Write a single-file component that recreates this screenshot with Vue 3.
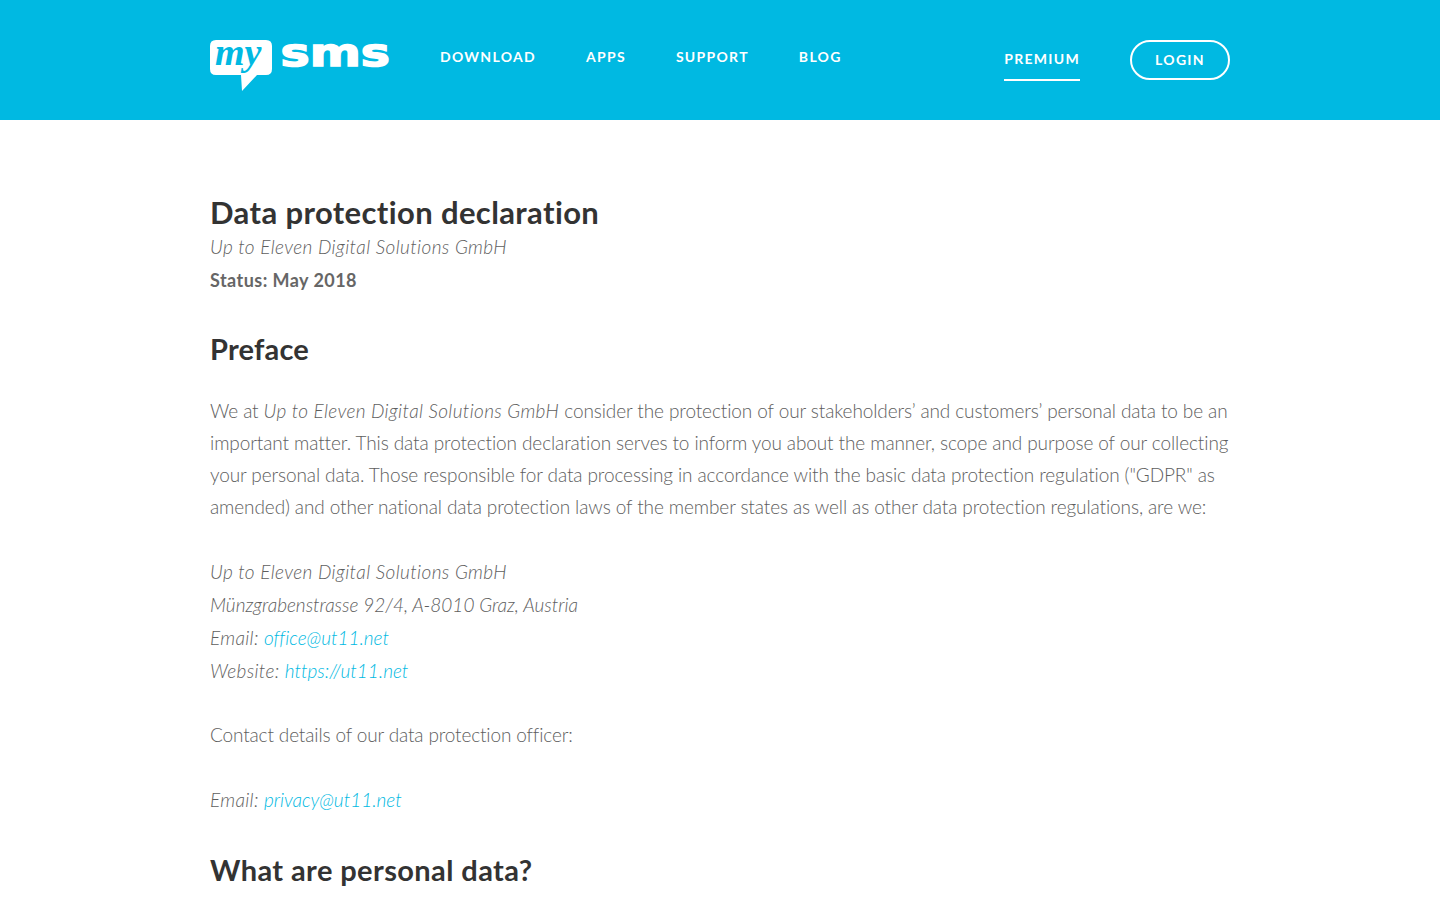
<template>
  <div class="page">
    <header class="header">
      <div class="header-inner">
        <a class="logo" href="#">
          <svg class="logo-svg" width="180" height="72" viewBox="0 -20 180 72">
            <path class="bubble" d="M6 0H56Q62 0 62 6V29Q62 35 56 35H47L32 51L31 35H6Q0 35 0 29V6Q0 0 6 0Z" />
            <text class="logo-my" x="5" y="25">my</text>
            <text class="logo-sms" transform="translate(70.5 26) scale(1.29 1)">sms</text>
          </svg>
        </a>
        <nav class="nav">
          <a v-for="item in navItems" :key="item" class="nav-link" href="#">{{ item }}</a>
        </nav>
        <div class="actions">
          <a class="premium" href="#">PREMIUM</a>
          <a class="login" href="#">LOGIN</a>
        </div>
      </div>
    </header>

    <main class="content">
      <h1>Data protection declaration</h1>
      <p class="company"><em>Up to Eleven Digital Solutions GmbH</em></p>
      <p class="status">Status: May 2018</p>

      <h2 class="preface">Preface</h2>
      <p class="para">
        We at <em>Up to Eleven Digital Solutions GmbH</em> consider the protection of our stakeholders’ and customers’ personal data to be an important matter. This data protection declaration serves to inform you about the manner, scope and purpose of our collecting your personal data. Those responsible for data processing in accordance with the basic data protection regulation ("GDPR" as amended) and other national data protection laws of the member states as well as other data protection regulations, are we:
      </p>

      <div class="address">
        <em class="wide">Up to Eleven Digital Solutions GmbH</em>
        <em>Münzgrabenstrasse 92/4, A-8010 Graz, Austria</em>
        <em><span class="label">Email: </span><a href="#">office@ut11.net</a></em>
        <em><span class="label">Website: </span><a href="#">https://ut11.net</a></em>
      </div>

      <p class="contact">Contact details of our data protection officer:</p>
      <div class="address officer">
        <em><span class="label">Email: </span><a href="#">privacy@ut11.net</a></em>
      </div>

      <h2 class="personal">What are personal data?</h2>
    </main>
  </div>
</template>

<script setup>
const navItems = ['DOWNLOAD', 'APPS', 'SUPPORT', 'BLOG'];
</script>

<style>
html, body {
  margin: 0;
  height: 100%;
  overflow: hidden;
  background: #fff;
}
</style>

<style scoped>
.page {
  font-family: Lato, "Open Sans", sans-serif;
  font-variant-ligatures: none;
  color: #5e5e5e;
}

.header {
  height: 120px;
  background: #00b9e2;
}

.header-inner {
  width: 1020px;
  height: 100%;
  margin: 0 auto;
  display: flex;
  align-items: center;
}

.logo {
  display: block;
  width: 180px;
  height: 72px;
  margin-top: -8px;
}

.logo-svg {
  display: block;
}

.bubble {
  fill: #fff;
}

.logo-my {
  font-family: "Liberation Serif", serif;
  font-size: 38px;
  font-weight: 700;
  font-style: italic;
  fill: #00b9e2;
}

.logo-sms {
  font-family: "DejaVu Sans", sans-serif;
  font-size: 38px;
  font-weight: 700;
  fill: #fff;
  stroke: #fff;
  stroke-width: 1.5px;
}

.nav {
  display: flex;
  gap: 50px;
  margin-left: 50px;
  margin-top: -7px;
}

.nav-link,
.premium,
.login {
  color: #fff;
  text-decoration: none;
  font-size: 14px;
  font-weight: 700;
  letter-spacing: 1.3px;
}

.actions {
  margin-left: auto;
  display: flex;
  align-items: center;
  gap: 50px;
}

.premium {
  padding: 10px 0;
  border-bottom: 2px solid #fff;
  line-height: 20px;
}

.login {
  box-sizing: border-box;
  width: 100px;
  height: 40px;
  padding-bottom: 2px;
  border: 2px solid #fff;
  border-radius: 20px;
  display: flex;
  align-items: center;
  justify-content: center;
}

.content {
  width: 1020px;
  margin: 0 auto;
  padding-top: 72px;
}

h1, h2 {
  margin: 0;
  color: #333;
  font-weight: 700;
}

h1 {
  font-size: 31px;
  line-height: 40px;
  letter-spacing: 0.38px;
}

h2 {
  font-size: 29px;
  line-height: 36px;
  letter-spacing: 0.2px;
}

p {
  margin: 0;
}

.company {
  margin-top: 1px;
  font-size: 19px;
  font-weight: 300;
  line-height: 27px;
  letter-spacing: 0.4px;
}

.status {
  font-size: 18px;
  font-weight: 700;
  line-height: 28px;
  margin-top: 6px;
  letter-spacing: 0.45px;
  color: #666;
}

.preface {
  margin-top: 37px;
}

.para {
  margin-top: 28px;
  font-size: 19px;
  font-weight: 300;
  line-height: 32px;
  letter-spacing: -0.1px;
}

.para em {
  letter-spacing: 0.36px;
}

.address {
  margin-top: 32px;
  font-size: 19px;
  font-weight: 300;
  line-height: 33px;
}

.address em {
  display: block;
}

.address .wide {
  letter-spacing: 0.4px;
}

.label {
  letter-spacing: 0.35px;
}

.address a {
  color: #00b9e2;
  text-decoration: none;
}

.contact {
  margin-top: 31px;
  font-size: 19px;
  font-weight: 300;
  line-height: 33px;
  letter-spacing: -0.14px;
}

.officer {
  margin-top: 32px;
}

.personal {
  margin-top: 36px;
  letter-spacing: 0.4px;
}
</style>
